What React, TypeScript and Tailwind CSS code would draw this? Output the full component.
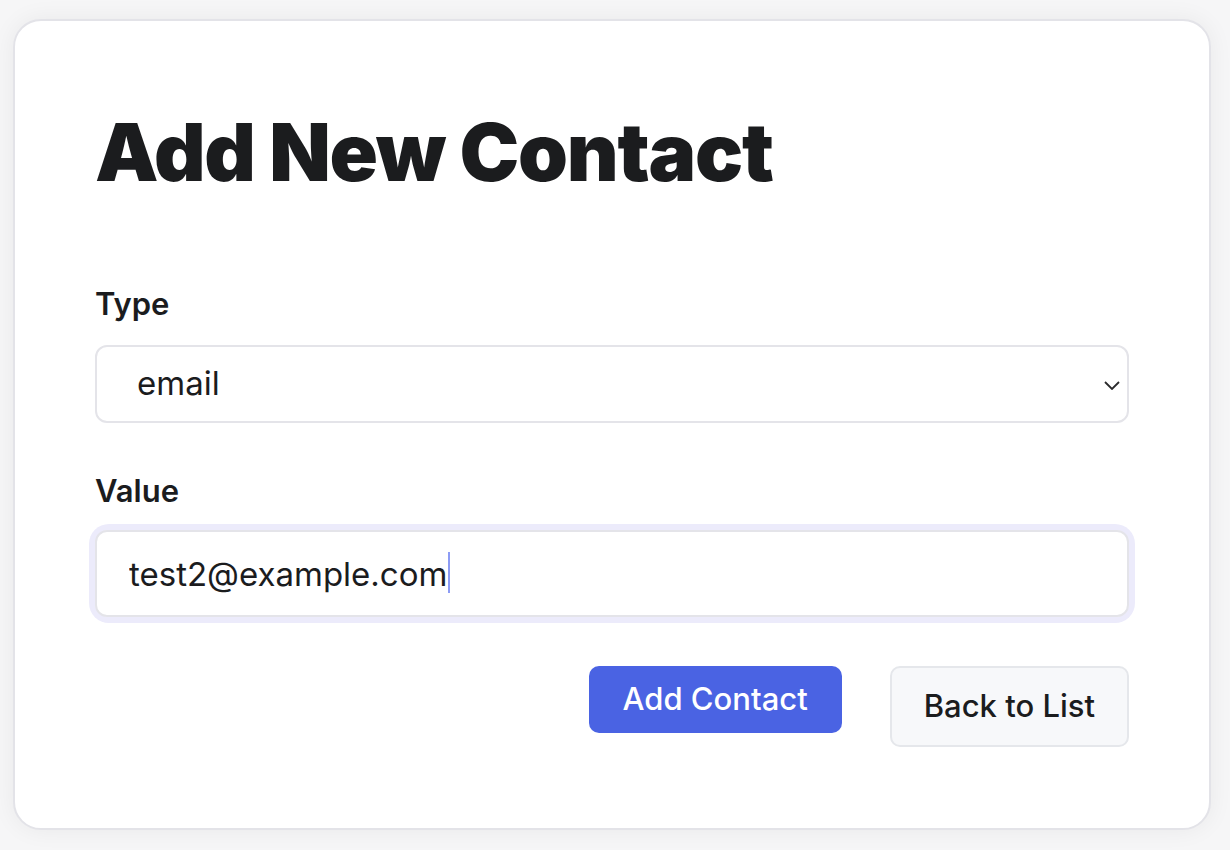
import { useState } from "react";

export default function App() {
    const [type, setType] = useState("email");
    const [value, setValue] = useState("test2@example.com");

    return (
        <div className="min-h-[850px] w-[1230px] bg-[#f6f6f7] pt-[19px] pl-[13px]" style={{ fontFamily: "Inter, 'Noto Sans', sans-serif" }}>
            <div className="w-[1198px] h-[811px] rounded-[28px] border-2 border-[#e3e3e8] bg-white shadow-[0_0_24px_rgba(0,0,0,0.06)] px-[80px] pt-[91px] flex flex-col text-[#1b1c1e]">
                {/* Heading */}
                <h1 className="text-[80px] leading-[80px] font-black tracking-[-0.016em]">Add New Contact</h1>

                {/* Type */}
                <label className="mt-[94px] text-[31px] leading-[36px] font-semibold">Type</label>
                <div className="relative mt-[23px]">
                    <select
                        value={type}
                        onChange={(e) => setType(e.target.value)}
                        className="appearance-none w-full h-[78px] rounded-[12px] border-2 border-[#e4e4e9] bg-white pl-[40px] text-[33px] outline-none"
                    >
                        <option value="email">email</option>
                        <option value="phone">phone</option>
                    </select>
                    <svg className="pointer-events-none absolute right-[9px] top-[36px]" width="16" height="9" viewBox="0 0 16 9" fill="none">
                        <path d="M1 1l7 7 7-7" stroke="#2a2a2c" strokeWidth="1.8" />
                    </svg>
                </div>

                {/* Value (focused look) */}
                <label className="mt-[50px] text-[31px] leading-[36px] font-semibold">Value</label>
                <div className="relative mt-[21px] rounded-[14px] shadow-[0_0_0_6px_#ecebfb]">
                    <input
                        value={value}
                        onChange={(e) => setValue(e.target.value)}
                        className="block w-full h-[87px] rounded-[12px] border-2 border-[#e4e4e9] bg-white px-[32px] text-[33px] outline-none"
                    />
                    <span className="pointer-events-none absolute left-[353px] top-[22px] h-[41px] w-[2px] bg-[#8d9cf5]" />
                </div>

                {/* Actions */}
                <div className="mt-[49px] flex items-start justify-end gap-[48px]">
                    <button className="h-[67px] rounded-[10px] bg-[#4a63e3] px-[34px] text-[31px] font-medium text-white">
                        Add Contact
                    </button>
                    <button className="h-[81px] rounded-[10px] border-2 border-[#e5e7eb] bg-[#f7f8fa] px-[32px] text-[31px] font-medium text-[#1b1c1e]">
                        Back to List
                    </button>
                </div>
            </div>
        </div>
    );
}
